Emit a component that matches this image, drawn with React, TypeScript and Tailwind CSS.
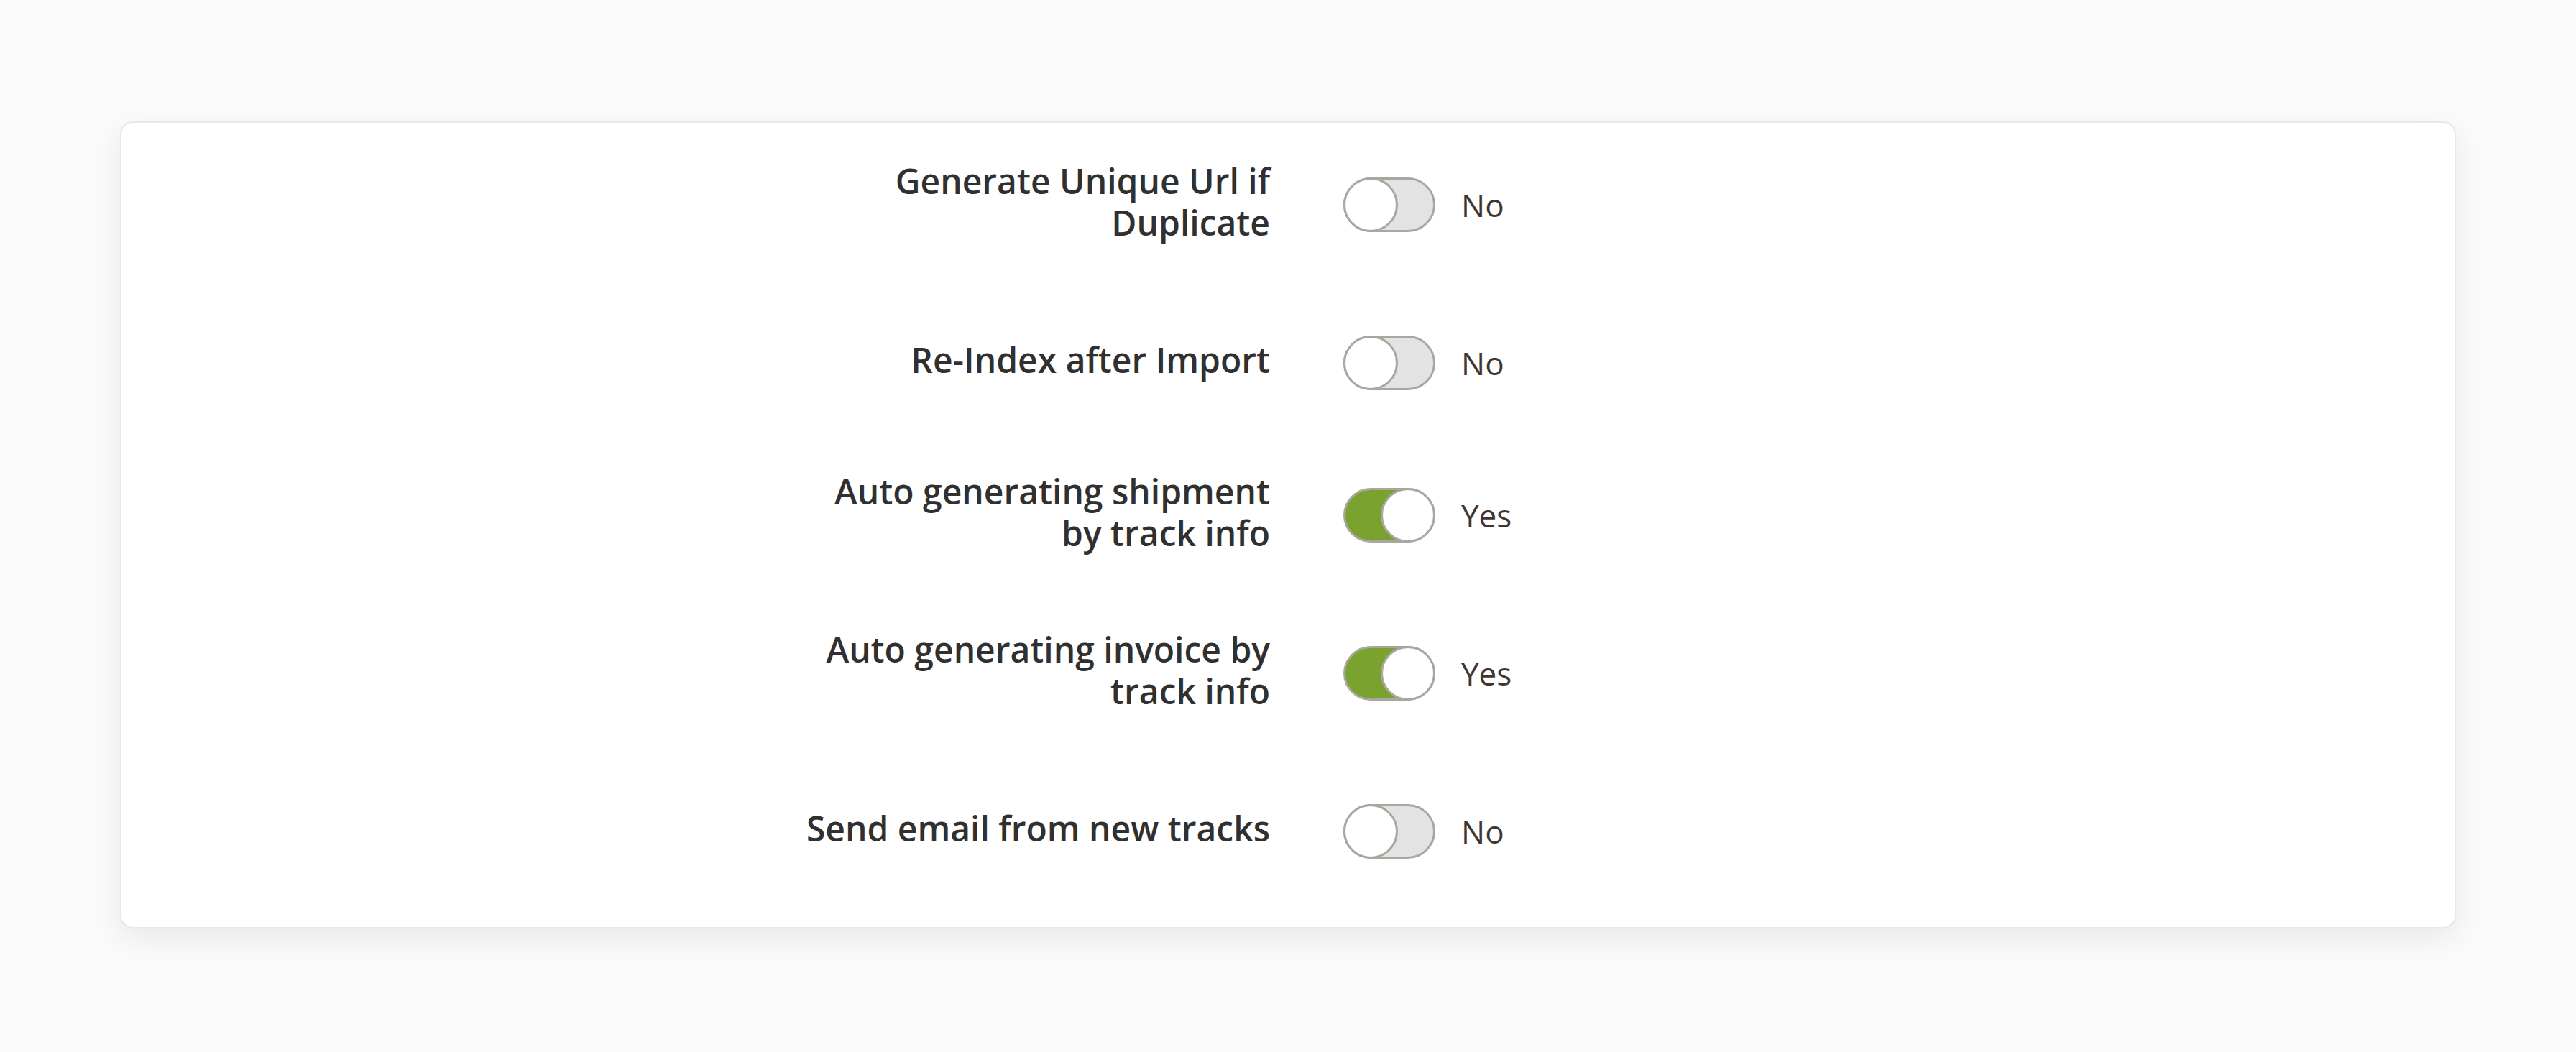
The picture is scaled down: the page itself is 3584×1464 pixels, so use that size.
import React, { useState } from 'react'

type Setting = {
  id: string
  label: React.ReactNode
  on: boolean
  rowHeight: string
}

const initialSettings: Setting[] = [
  {
    id: 'unique-url',
    label: (
      <>
        Generate Unique Url if
        <br />
        Duplicate
      </>
    ),
    on: false,
    rowHeight: 'h-[228px]',
  },
  { id: 'reindex', label: 'Re-Index after Import', on: false, rowHeight: 'h-[212px]' },
  {
    id: 'auto-shipment',
    label: (
      <>
        Auto generating shipment
        <br />
        by track info
      </>
    ),
    on: true,
    rowHeight: 'h-[212px]',
  },
  {
    id: 'auto-invoice',
    label: (
      <>
        Auto generating invoice by
        <br />
        track info
      </>
    ),
    on: true,
    rowHeight: 'h-[228px]',
  },
  { id: 'send-email', label: 'Send email from new tracks', on: false, rowHeight: 'h-[212px]' },
]

function Switch({ on, onToggle }: { on: boolean; onToggle: () => void }) {
  return (
    <button
      type="button"
      role="switch"
      aria-checked={on}
      onClick={onToggle}
      className={`relative w-[128px] h-[76px] shrink-0 rounded-full border-[3px] border-[#aaa6a0] ${
        on ? 'bg-[#79a22e]' : 'bg-[#e3e3e3]'
      }`}
    >
      <span
        className={`absolute top-[-3px] w-[76px] h-[76px] rounded-full bg-white border-[3px] border-[#aaa6a0] ${
          on ? 'right-[-3px]' : 'left-[-3px]'
        }`}
      />
    </button>
  )
}

export default function App() {
  const [settings, setSettings] = useState(initialSettings)

  const toggle = (id: string) => {
    setSettings((prev) => prev.map((s) => (s.id === id ? { ...s, on: !s.on } : s)))
  }

  return (
    <div
      className="min-h-screen bg-[#fafafa] px-[167px] pt-[169px] pb-[174px]"
      style={{ fontFamily: '"Open Sans", "Noto Sans", sans-serif' }}
    >
      <div className="bg-white border-2 border-[#e8e8e8] rounded-[18px] shadow-[0_14px_40px_rgba(0,0,0,0.07)] pb-[27px]">
        {settings.map((s) => (
          <div key={s.id} className={`flex items-center ${s.rowHeight}`}>
            <label className="w-[1598px] shrink-0 -mt-2 text-right text-[48px] leading-[1.2] font-semibold text-[#303030] whitespace-nowrap">
              {s.label}
            </label>
            <div className="ml-[102px] flex items-center gap-[36px]">
              <Switch on={s.on} onToggle={() => toggle(s.id)} />
              <span className="text-[44px] text-[#41362f]">{s.on ? 'Yes' : 'No'}</span>
            </div>
          </div>
        ))}
      </div>
    </div>
  )
}
